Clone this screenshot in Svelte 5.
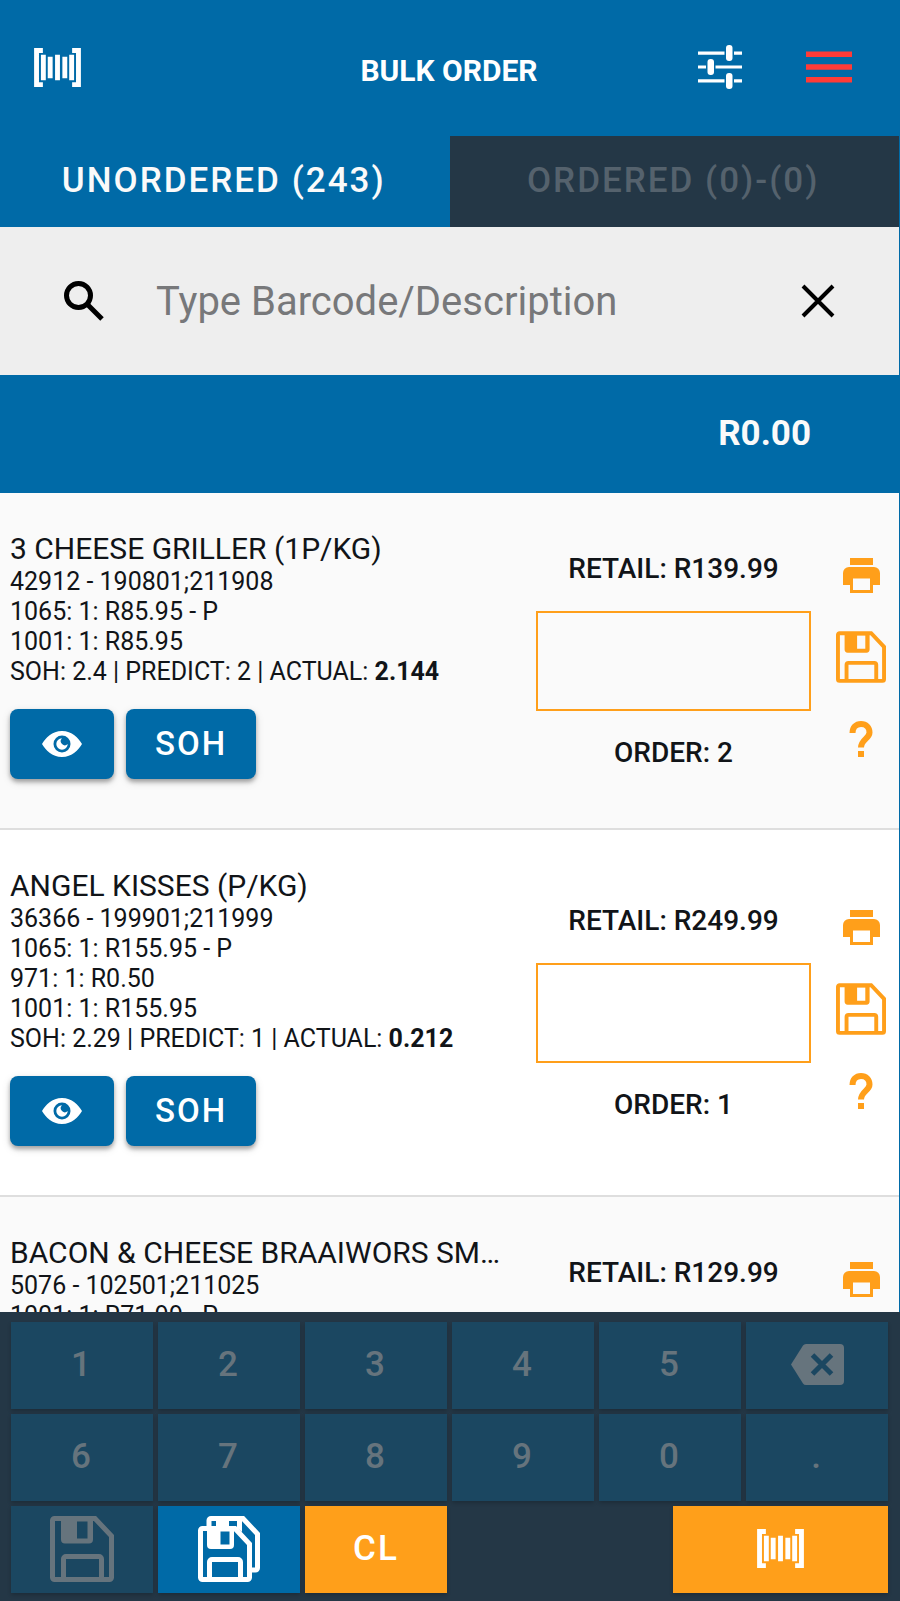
<script>
  let search = $state('');
  let tab = $state('unordered');
  let products = $state([
    {
      name: '3 CHEESE GRILLER (1P/KG)',
      codes: '42912 - 190801;211908',
      suppliers: ['1065: 1: R85.95 - P', '1001: 1: R85.95'],
      soh: '2.4', predict: 2, actual: '2.144',
      retail: '139.99', order: 2, qty: ''
    },
    {
      name: 'ANGEL KISSES (P/KG)',
      codes: '36366 - 199901;211999',
      suppliers: ['1065: 1: R155.95 - P', '971: 1: R0.50', '1001: 1: R155.95'],
      soh: '2.29', predict: 1, actual: '0.212',
      retail: '249.99', order: 1, qty: ''
    },
    {
      name: 'BACON & CHEESE BRAAIWORS SMOKED (P/KG)',
      codes: '5076 - 102501;211025',
      suppliers: ['1001: 1: R71.99 - P', '1065: 1: R71.99'],
      soh: '1.2', predict: 1, actual: '1.104',
      retail: '129.99', order: 1, qty: ''
    }
  ]);

  const keys = ['1', '2', '3', '4', '5', 'del', '6', '7', '8', '9', '0', '.'];
</script>

{#snippet scanIcon()}
  <svg class="scan" viewBox="0 0 48 40" aria-hidden="true">
    <path d="M0 0h9v5H5v30h4v5H0zM48 0h-9v5h4v30h-4v5h9zM7 7h5v26H7zM14 9h5v22h-5zM21.500 7h5v26h-5zM29 9h5v22h-5zM36 7h5v26h-5z" />
  </svg>
{/snippet}

{#snippet saveIcon()}
  <svg class="save" viewBox="0 0 64 66" aria-hidden="true">
    <path class="line" d="M4.500 2.500H45L61.500 20V61.500a2 2 0 0 1-2 2H4.500a2 2 0 0 1-2-2V4.500a2 2 0 0 1 2-2z" />
    <path class="line" d="M13.500 62V43a2.500 2.500 0 0 1 2.500-2.500H49a2.500 2.500 0 0 1 2.500 2.500V62" />
    <path fill-rule="evenodd" d="M11 2H43V23.500a4 4 0 0 1-4 4H15a4 4 0 0 1-4-4zM27 5.500V22.500H37.500V5.500z" />
  </svg>
{/snippet}

<div class="app">
  <header>
    <button class="plain" aria-label="Scan barcode">{@render scanIcon()}</button>
    <h1>BULK ORDER</h1>
    <div class="actions">
      <button class="plain" aria-label="Filters">
        <svg class="tune" viewBox="0 0 44 44" aria-hidden="true">
          <path d="M0 6.500h26.500v3.200H0zM36 6.500h8v3.200h-8zM0 20.400h8v3.200H0zM17.500 20.400H44v3.200H17.500zM0 34.300h26.500v3.200H0zM36 34.300h8v3.200h-8z" />
          <rect x="28" y="0" width="6.500" height="16" rx="3" />
          <rect x="9.500" y="14" width="6.500" height="16" rx="3" />
          <rect x="28" y="28" width="6.500" height="16" rx="3" />
        </svg>
      </button>
      <button class="plain menu" aria-label="Menu">
        <svg viewBox="0 0 46 32" aria-hidden="true">
          <path d="M0 .5h46v5.500H0zM0 13.200h46v5.500H0zM0 26h46v5.500H0z" />
        </svg>
      </button>
    </div>
  </header>

  <nav class="tabs">
    <button class:active={tab === 'unordered'} onclick={() => (tab = 'unordered')}>UNORDERED (243)</button>
    <button class:active={tab === 'ordered'} onclick={() => (tab = 'ordered')}>ORDERED (0)-(0)</button>
  </nav>

  <div class="search">
    <svg class="glass" viewBox="0 0 40 40" aria-hidden="true">
      <circle cx="14.500" cy="14.500" r="12" />
      <path d="M23.500 23.500L38 38" />
    </svg>
    <input type="text" placeholder="Type Barcode/Description" aria-label="Search" bind:value={search} />
    <button class="plain" aria-label="Clear search" onclick={() => (search = '')}>
      <svg class="clear" viewBox="0 0 34 34" aria-hidden="true"><path d="M2 2l30 30M32 2L2 32" /></svg>
    </button>
  </div>

  <div class="total">R0.00</div>

  <main>
    {#each products as p (p.codes)}
      <article>
        <div class="info">
          <h2>{p.name}</h2>
          <p>{p.codes}</p>
          {#each p.suppliers as s}
            <p>{s}</p>
          {/each}
          <p>SOH: {p.soh} | PREDICT: {p.predict} | ACTUAL: <b>{p.actual}</b></p>
          <div class="buttons">
            <button class="view" aria-label="View product">
              <svg viewBox="0 0 40 26" aria-hidden="true">
                <path fill-rule="evenodd" d="M20 0C30 0 36.500 7 40 13C36.500 19 30 26 20 26S3.500 19 0 13C3.500 7 10 0 20 0zM20 4.500a8.500 8.500 0 1 0 0 17a8.500 8.500 0 1 0 0-17z" />
                <path d="M20 7.300a4 4 0 0 0 5.700 5.700A5.700 5.700 0 1 1 20 7.300z" />
              </svg>
            </button>
            <button class="soh">SOH</button>
          </div>
        </div>
        <div class="qty">
          <span>RETAIL: R{p.retail}</span>
          <input type="text" inputmode="decimal" aria-label="Order quantity for {p.name}" bind:value={p.qty} />
          <span>ORDER: {p.order}</span>
        </div>
        <div class="tools">
          <button class="plain" aria-label="Print label">
            <svg class="print" viewBox="0 0 37 35" aria-hidden="true">
              <path fill-rule="evenodd" d="M7 0h23v7H7zM6 9h25a6 6 0 0 1 6 6v12h-7v8H7v-8H0V15a6 6 0 0 1 6-6zM10 20.500v11.500h17V20.500z" />
            </svg>
          </button>
          <button class="plain" aria-label="Save line">{@render saveIcon()}</button>
          <button class="plain" aria-label="Help">
            <svg class="help" viewBox="0 0 24 36" aria-hidden="true">
              <path class="hook" d="M3.500 12C3.500 6.500 7 3 12 3s8.500 3.500 8.500 8.500c0 6-8.500 7-8.500 15" />
              <path d="M9 30h6v6H9z" />
            </svg>
          </button>
        </div>
      </article>
    {/each}
  </main>

  <footer>
    {#each keys as k}
      {#if k === 'del'}
        <button class="key" disabled aria-label="Backspace">
          <svg class="del" viewBox="0 0 53 41" aria-hidden="true">
            <path d="M15 0H49a4 4 0 0 1 4 4V37a4 4 0 0 1-4 4H15q-2 0-3-1.500L0 20.500L12 1.500Q13 0 15 0z" />
            <path class="cross" d="M21.500 11l19 19M40.500 11l-19 19" />
          </svg>
        </button>
      {:else}
        <button class="key" disabled>{k}</button>
      {/if}
    {/each}
    <button class="key" disabled aria-label="Save">{@render saveIcon()}</button>
    <button class="key all" aria-label="Save all">
      <svg viewBox="0 0 62 66" aria-hidden="true">
        <path class="line" d="M11 12V4.500a2 2 0 0 1 2-2H45L59.500 18V52a2 2 0 0 1-2 2H53" />
        <path class="line" d="M4.500 12.500H37L51.500 28V61.500a2 2 0 0 1-2 2H4.500a2 2 0 0 1-2-2V14.500a2 2 0 0 1 2-2z" />
        <path class="line" d="M11.500 62V46a2.500 2.500 0 0 1 2.500-2.500H40a2.500 2.500 0 0 1 2.500 2.500V62" />
        <path fill-rule="evenodd" d="M9 12H36V29a4 4 0 0 1-4 4H13a4 4 0 0 1-4-4zM22.500 15.500V28.500H31.500V15.500z" />
        <path d="M18 2h13v10H18zM39 2h5v14l-5-4z" />
      </svg>
    </button>
    <button class="key orange">CL</button>
    <button class="key orange wide" aria-label="Scan">{@render scanIcon()}</button>
  </footer>
</div>

<style>
  :global(body) { margin: 0; }

  .app {
    --blue: #006aa7;
    --dark: #243746;
    --orange: #ff9f1a;
    display: flex;
    flex-direction: column;
    height: 100vh;
    background: var(--blue);
    color: #111418;
    font-family: Roboto, sans-serif;
    overflow: hidden;
  }

  button, input { font-family: inherit; margin: 0; border: 0; border-radius: 0; }
  svg { display: block; fill: currentColor; }
  h1, h2, p { margin: 0; font-weight: 400; }
  .plain { padding: 0; background: none; color: inherit; }

  header {
    display: grid;
    grid-template-columns: 1fr auto 1fr;
    align-items: center;
    flex: none;
    box-sizing: border-box;
    height: 136px;
    padding: 0 48px 2px 34px;
    color: #fff;
  }
  h1 {
    padding: 8px 0 0 12px;
    font-size: 30px;
    line-height: 36px;
    font-weight: 700;
  }
  .actions { display: flex; justify-content: flex-end; align-items: center; gap: 64px; }
  .scan { width: 47px; height: 39px; }
  .tune { width: 44px; height: 44px; }
  .menu { color: #ff3b37; }
  .menu svg { width: 46px; height: 32px; }

  .tabs {
    display: grid;
    grid-template-columns: 1fr 1fr;
    flex: none;
    height: 91px;
    margin-right: 1px;
  }
  .tabs button {
    padding: 0 2px 2px 0;
    background: var(--dark);
    color: #55626d;
    font-size: 35px;
    font-weight: 500;
    letter-spacing: 2px;
  }
  .tabs .active { background: var(--blue); color: #fafafa; }

  .search {
    display: flex;
    align-items: center;
    flex: none;
    height: 148px;
    margin-right: 1px;
    padding: 0 64px;
    background: #eee;
    color: #000;
  }
  .glass { flex: none; width: 40px; height: 40px; fill: none; stroke: currentColor; stroke-width: 5; }
  .search input {
    flex: 1;
    min-width: 0;
    padding: 0 52px;
    background: none;
    font-size: 40px;
    outline: none;
  }
  .search input::placeholder { color: #77787a; opacity: 1; }
  .clear { width: 34px; height: 34px; stroke: currentColor; stroke-width: 4; }

  .total {
    flex: none;
    padding: 0 89px;
    color: #fafafa;
    font-size: 35px;
    font-weight: 700;
    line-height: 118px;
    text-align: right;
  }

  main { flex: 1; min-height: 0; margin-right: 1px; overflow: hidden; background: #fafafa; }
  article {
    display: grid;
    grid-template-columns: minmax(0, 1fr) 275px 76px;
    column-gap: 12px;
    border-bottom: 2px solid #dedede;
    background: #fafafa;
  }
  article:nth-child(even) { background: #fff; }
  .info { min-width: 0; padding: 38px 10px 49px; }
  h2 {
    font-size: 30px;
    line-height: 36px;
    white-space: nowrap;
    overflow: hidden;
    text-overflow: ellipsis;
  }
  p { font-size: 25px; line-height: 30px; white-space: nowrap; }
  .buttons { display: flex; gap: 12px; margin-top: 22px; }
  .buttons button {
    display: flex;
    align-items: center;
    justify-content: center;
    height: 70px;
    padding: 0 0 2px;
    border-radius: 8px;
    background: var(--blue);
    color: #fff;
    font-size: 33px;
    font-weight: 500;
    letter-spacing: 2px;
    box-shadow: 0 3px 4px rgba(0, 0, 0, 0.3), 0 3px 10px rgba(0, 0, 0, 0.12);
  }
  .buttons .view { width: 104px; padding: 0; }
  .buttons .soh { width: 130px; }
  .view svg { width: 40px; height: 26px; }

  .qty {
    display: flex;
    flex-direction: column;
    align-items: center;
    justify-content: center;
    gap: 24px;
    font-size: 28px;
    font-weight: 500;
    line-height: 36px;
  }
  .qty input {
    box-sizing: border-box;
    width: 100%;
    height: 100px;
    border: 2px solid var(--orange);
    background: none;
    font-size: 36px;
    text-align: center;
  }

  .tools {
    display: flex;
    flex-direction: column;
    align-items: center;
    justify-content: center;
    gap: 38px;
    padding-bottom: 7px;
    color: var(--orange);
  }
  .print { width: 37px; height: 35px; }
  .save { width: 50px; height: 52px; }
  .help { width: 24px; height: 36px; }
  .hook { fill: none; stroke: currentColor; stroke-width: 6; }
  .line { fill: none; stroke: currentColor; stroke-width: 5; }

  footer {
    display: grid;
    grid-template-columns: repeat(12, 1fr);
    grid-auto-rows: 87px;
    gap: 5px;
    flex: none;
    padding: 10px 12px 8px 11px;
    background: var(--dark);
  }
  .key {
    display: flex;
    align-items: center;
    justify-content: center;
    grid-column: span 2;
    padding: 0 0 2px;
    background: #1b4761;
    color: #66747d;
    font-size: 35px;
    font-weight: 500;
    letter-spacing: 2px;
    box-shadow: 0 2px 4px rgba(0, 0, 0, 0.2);
  }
  .key .save { width: 64px; height: 66px; }
  .del { width: 53px; height: 41px; }
  .cross { stroke: #1b4761; stroke-width: 5; }
  .all { background: var(--blue); color: #fff; }
  .all svg { width: 62px; height: 66px; }
  .orange { background: var(--orange); color: #fff; }
  .wide { grid-column: 10 / span 3; }
</style>
